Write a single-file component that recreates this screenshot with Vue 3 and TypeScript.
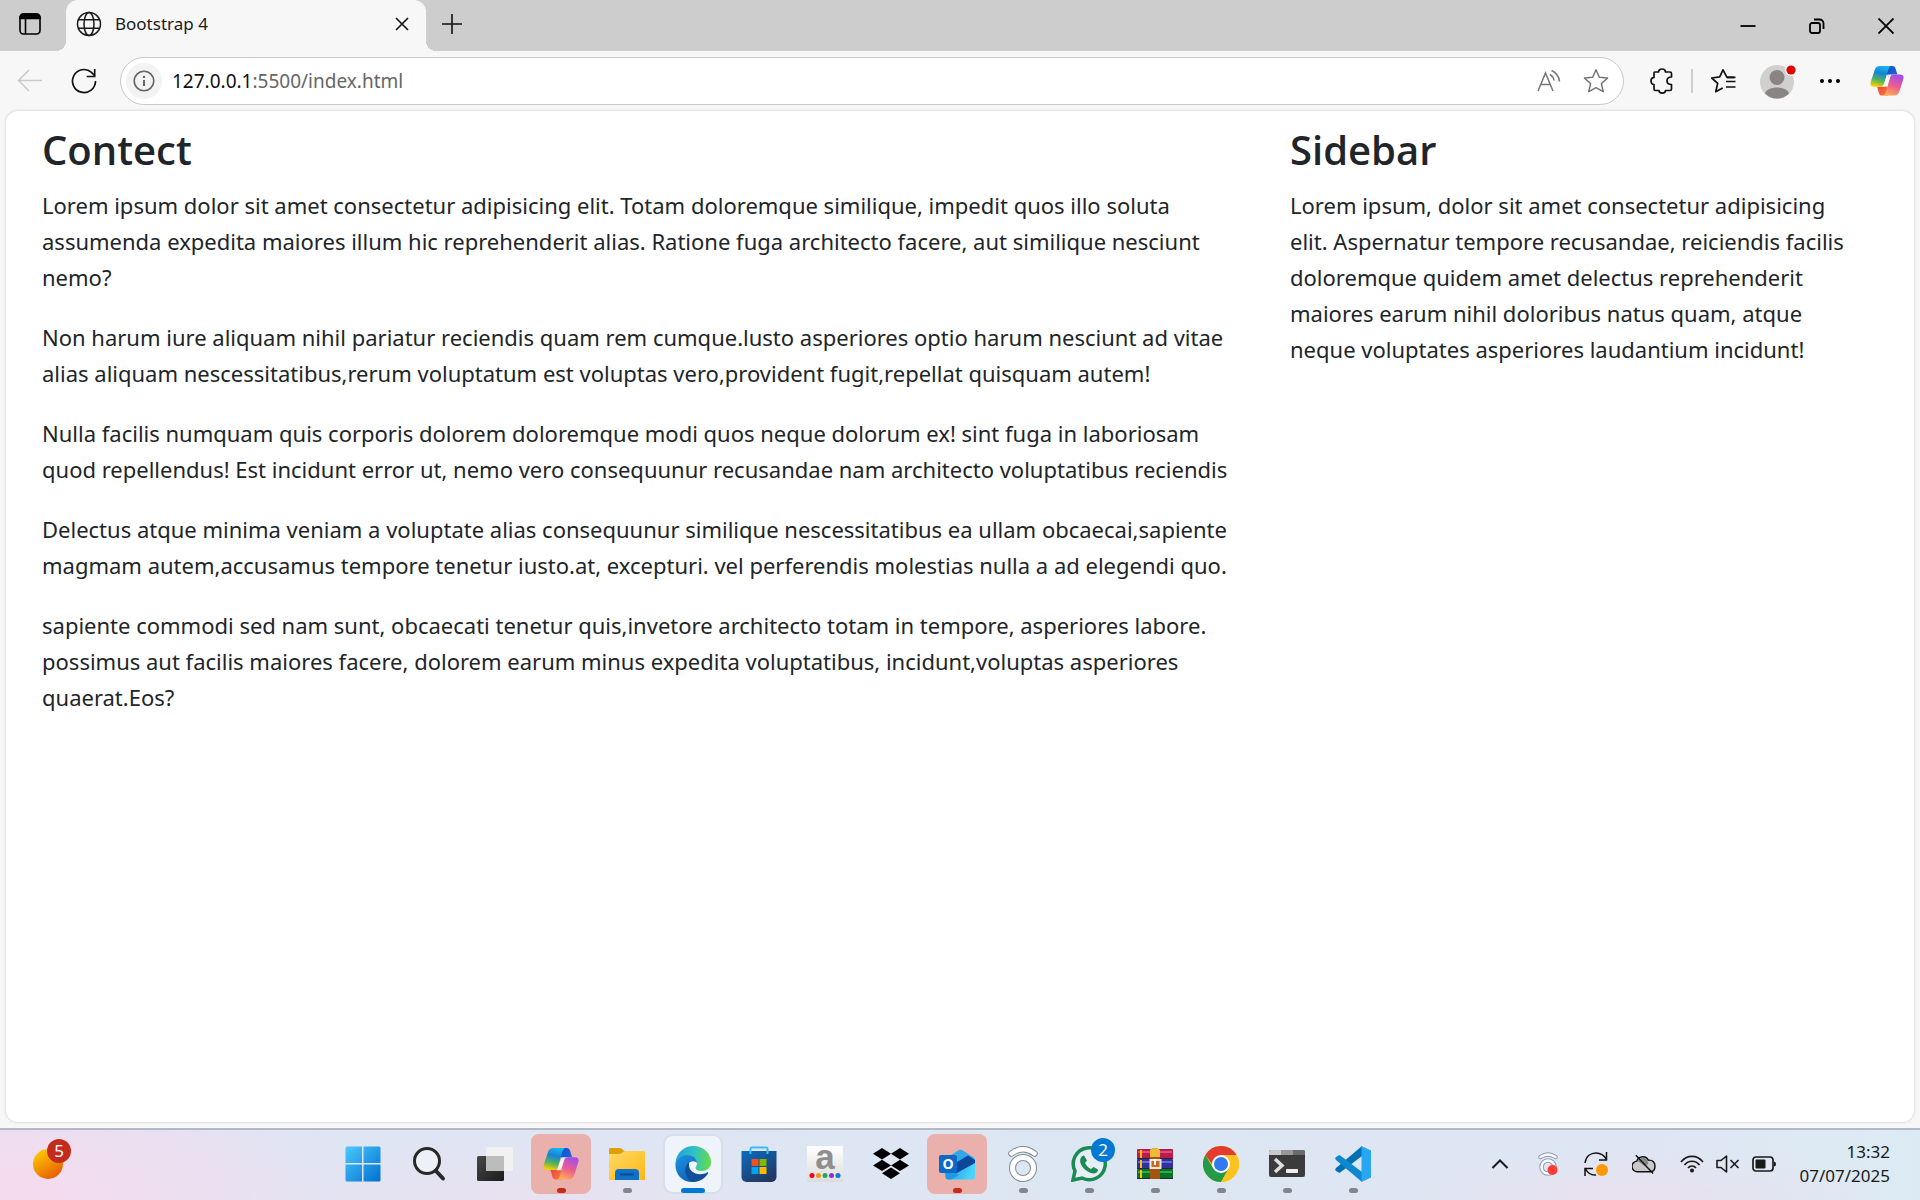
<script setup lang="ts">
const article: string[] = [
  'Lorem ipsum dolor sit amet consectetur adipisicing elit. Totam doloremque similique, impedit quos illo soluta\nassumenda expedita maiores illum hic reprehenderit alias. Ratione fuga architecto facere, aut similique nesciunt\nnemo?',
  'Non harum iure aliquam nihil pariatur reciendis quam rem cumque.lusto asperiores optio harum nesciunt ad vitae\nalias aliquam nescessitatibus,rerum voluptatum est voluptas vero,provident fugit,repellat quisquam autem!',
  'Nulla facilis numquam quis corporis dolorem doloremque modi quos neque dolorum ex! sint fuga in laboriosam\nquod repellendus! Est incidunt error ut, nemo vero consequunur recusandae nam architecto voluptatibus reciendis',
  'Delectus atque minima veniam a voluptate alias consequunur similique nescessitatibus ea ullam obcaecai,sapiente\nmagmam autem,accusamus tempore tenetur iusto.at, excepturi. vel perferendis molestias nulla a ad elegendi quo.',
  'sapiente commodi sed nam sunt, obcaecati tenetur quis,invetore architecto totam in tempore, asperiores labore.\npossimus aut facilis maiores facere, dolorem earum minus expedita voluptatibus, incidunt,voluptas asperiores\nquaerat.Eos?',
]
const aside =
  'Lorem ipsum, dolor sit amet consectetur adipisicing\nelit. Aspernatur tempore recusandae, reiciendis facilis\ndoloremque quidem amet delectus reprehenderit\nmaiores earum nihil doloribus natus quam, atque\nneque voluptates asperiores laudantium incidunt!'
</script>

<template>
  <div class="desktop">
    <svg class="defs" width="0" height="0" aria-hidden="true">
      <defs>
        <linearGradient id="cpA" x1="0.6" y1="0" x2="0.35" y2="1">
          <stop offset="0" stop-color="#18b5f0" /><stop offset="0.35" stop-color="#1583d8" />
          <stop offset="0.7" stop-color="#55b45a" /><stop offset="1" stop-color="#f5d000" />
        </linearGradient>
        <linearGradient id="cpB" x1="0.7" y1="0" x2="0.3" y2="1">
          <stop offset="0" stop-color="#a04df0" /><stop offset="0.5" stop-color="#ec5a92" /><stop offset="1" stop-color="#ffb050" />
        </linearGradient>
        <linearGradient id="cpC" x1="0" y1="0" x2="1" y2="1">
          <stop offset="0" stop-color="#0a50c8" /><stop offset="1" stop-color="#2268e0" />
        </linearGradient>
        <linearGradient id="cpD" x1="0" y1="0" x2="1" y2="1">
          <stop offset="0" stop-color="#e8403c" /><stop offset="1" stop-color="#ff7a3c" />
        </linearGradient>
        <symbol id="copilot" viewBox="0 0 36 34">
          <path d="M17 1h6.500c2 0 3 1 3.600 3l2 6.200h-5.600c-2 0-3.300 1-3.900 3L17 8z" fill="url(#cpC)" />
          <path d="M19 32.500h-6.300c-2 0-2.800-1-3.400-3L7.500 23H13c2 0 3-1 3.500-2.500L20 25z" fill="url(#cpD)" />
          <path fill-rule="evenodd" d="M10.500 1H23c-2 0-2.800 1.500-3.500 3.500L15 19.500C14.200 22.200 13 23 11 23H4c-3 0-4.200-2-3.300-5L5 5C6 2.200 7.500 1 10.500 1z" fill="url(#cpA)" />
          <path d="M25.500 32.500H13c2 0 3-1.500 3.700-3.500L21 14c.8-2.700 2.200-3.800 4.200-3.800H32c3 0 4.200 2 3.300 5L31 28.500c-1 2.800-2.500 4-5.500 4z" fill="url(#cpB)" />
          <path d="M18.600 10.200h4.400c-1.400.7-1.800 2-2.300 3.800l-2.700 9.200H13.500c1-.7 1.500-2 2-3.700z" fill="#fff" fill-opacity="0.850" />
        </symbol>
        <linearGradient id="winG" x1="0" y1="0" x2="1" y2="1">
          <stop offset="0" stop-color="#4bc9fb" /><stop offset="1" stop-color="#006fd0" />
        </linearGradient>
        <linearGradient id="sunG" x1="0.2" y1="0" x2="0.8" y2="1">
          <stop offset="0" stop-color="#ffcf00" /><stop offset="1" stop-color="#e65500" />
        </linearGradient>
        <linearGradient id="foldG" x1="0" y1="0" x2="1" y2="1">
          <stop offset="0" stop-color="#ffd968" /><stop offset="1" stop-color="#fdb813" />
        </linearGradient>
        <linearGradient id="edgeA" x1="0" y1="0.3" x2="1" y2="0.4">
          <stop offset="0" stop-color="#1f9fe0" /><stop offset="0.5" stop-color="#2fc0c8" /><stop offset="1" stop-color="#62dc4c" />
        </linearGradient>
        <linearGradient id="edgeB" x1="0" y1="0" x2="0.6" y2="1">
          <stop offset="0" stop-color="#1a94e0" /><stop offset="1" stop-color="#0f62b8" />
        </linearGradient>
        <linearGradient id="storeG" x1="0" y1="0" x2="0.6" y2="1">
          <stop offset="0" stop-color="#0b6cc0" /><stop offset="1" stop-color="#213a66" />
        </linearGradient>
        <linearGradient id="amzG" x1="0" y1="0" x2="0" y2="1">
          <stop offset="0" stop-color="#ffffff" /><stop offset="1" stop-color="#dcdcdc" />
        </linearGradient>
        <linearGradient id="darkG" x1="0" y1="0" x2="1" y2="1">
          <stop offset="0" stop-color="#484848" /><stop offset="1" stop-color="#1b1b1b" />
        </linearGradient>
        <linearGradient id="mailG" x1="0" y1="0" x2="1" y2="0.3">
          <stop offset="0" stop-color="#168fdc" /><stop offset="1" stop-color="#48d4fb" />
        </linearGradient>
      </defs>
    </svg>

    <header class="tabstrip">
      <button class="bare tab-actions" aria-label="Tab actions menu">
        <svg width="22" height="22" viewBox="0 0 22 22" fill="none" stroke="#000" stroke-width="1.600">
          <rect x="1" y="1" width="20" height="20" rx="3.500" />
          <path d="M1 5V4.500A3.500 3.500 0 0 1 4.500 1h13A3.500 3.500 0 0 1 21 4.500V5.500H1z" fill="#000" />
          <path d="M6.500 5v16" />
        </svg>
      </button>
      <div class="tab">
        <svg width="26" height="26" viewBox="0 0 26 26" fill="none" stroke="#1a1a1a" stroke-width="1.500">
          <circle cx="13" cy="13" r="11.500" />
          <ellipse cx="13" cy="13" rx="5" ry="11.500" />
          <path d="M2.500 8.800h21M2.500 17.200h21" />
        </svg>
        <span class="tab-title">Bootstrap 4</span>
        <button class="bare" aria-label="Close tab">
          <svg width="14" height="14" viewBox="0 0 14 14" stroke="#111" stroke-width="1.600"><path d="M1 1l12 12M13 1L1 13" /></svg>
        </button>
      </div>
      <button class="bare new-tab" aria-label="New tab">
        <svg width="22" height="22" viewBox="0 0 22 22" stroke="#111" stroke-width="1.600"><path d="M11 1v20M1 11h20" /></svg>
      </button>
      <div class="window-controls">
        <button class="bare" aria-label="Minimize">
          <svg width="16" height="16" viewBox="0 0 16 16"><path d="M0.500 8h15" stroke="#000" stroke-width="1.800" /></svg>
        </button>
        <button class="bare" aria-label="Restore">
          <svg width="16" height="16" viewBox="0 0 16 16" fill="none" stroke="#000" stroke-width="1.800">
            <rect x="1" y="5" width="10" height="10" rx="2" /><path d="M5 1.500h5.500a4 4 0 0 1 4 4V11" />
          </svg>
        </button>
        <button class="bare" aria-label="Close">
          <svg width="16" height="16" viewBox="0 0 16 16" stroke="#000" stroke-width="1.800"><path d="M0.500 0.500l15 15M15.500 0.500l-15 15" /></svg>
        </button>
      </div>
    </header>

    <nav class="toolbar">
      <button class="bare tool" aria-label="Back" disabled>
        <svg width="26" height="24" viewBox="0 0 26 24" fill="none" stroke="#c9c9c9" stroke-width="1.500"><path d="M25 11.500H1.500M12 1L1.500 11.500 12 22" /></svg>
      </button>
      <button class="bare tool reload" aria-label="Refresh">
        <svg width="26" height="26" viewBox="0 0 26 26" fill="none" stroke="#111" stroke-width="1.700">
          <path d="M24.500 13A11.500 11.500 0 1 1 20.500 4.300L23.500 7.500" /><path d="M23.700 1v7.500h-8" />
        </svg>
      </button>
      <div class="address">
        <button class="bare site-info" aria-label="View site information">
          <svg width="22" height="22" viewBox="0 0 22 22" fill="none" stroke="#666" stroke-width="1.600">
            <circle cx="11" cy="11" r="9.800" /><path d="M11 10v6" stroke-width="2" /><circle cx="11" cy="7" r="1.200" fill="#666" stroke="none" />
          </svg>
        </button>
        <a class="url" href="#"><span class="host">127.0.0.1</span>:5500/index.html</a>
        <button class="bare" aria-label="Read aloud">
          <svg width="24" height="24" viewBox="0 0 24 24" fill="none" stroke="#767676" stroke-width="1.500">
            <path d="M1 22L8.500 4 16 22M3.700 15.500h9.600" /><path d="M13 5.500c2.500 1.500 3.600 3.500 4 6M14.500 1.500c4.500 2 7.500 6 8 11" />
          </svg>
        </button>
        <button class="bare" aria-label="Add to favorites">
          <svg width="26" height="26" viewBox="0 0 26 26" fill="none" stroke="#767676" stroke-width="1.500" stroke-linejoin="round">
            <path d="M13 1.800l3.300 7.400 8.200.9-6.100 5.400 1.800 8.200-7.200-4-7.200 4 1.800-8.200-6.100-5.400 8.200-.9z" />
          </svg>
        </button>
      </div>
      <button class="bare extensions" aria-label="Extensions">
        <svg width="24" height="26" viewBox="0 0 24 26" fill="none" stroke="#111" stroke-width="1.700" stroke-linejoin="round">
          <path d="M4.500 4h4c0-4 7-4 7 0H20c1 0 1.500.5 1.500 1.500V9c-6 0-6 7.500 0 7.500V21c0 1-.5 1.500-1.500 1.500h-4.500c0 3.500-6.500 3.500-6.500 0H5.500C4.500 22.500 4 22 4 21v-4.500c-4 0-4-7 0-7V5c0-.6.200-1 .5-1z" />
        </svg>
      </button>
      <span class="divider"></span>
      <button class="bare favorites" aria-label="Favorites">
        <svg width="26" height="26" viewBox="0 0 26 26" fill="none" stroke="#111" stroke-width="1.700" stroke-linejoin="round">
          <path d="M24 9.300H17L13 1.800 9.700 8.900l-8 1.100 6 5.400-2 8.300 7-3.700" /><path d="M16 13.500h9.500M16 19h9.500M17 9.300h8.500" />
        </svg>
      </button>
      <button class="bare profile" aria-label="Profile">
        <svg width="38" height="38" viewBox="0 0 38 38">
          <circle cx="18" cy="20" r="17" fill="#d2d0ce" />
          <circle cx="18" cy="15.500" r="7.500" fill="#8a8583" />
          <path d="M6 31.500c2-8 22-8 24 0a17 17 0 0 1-24 0z" fill="#8a8583" />
          <circle cx="32" cy="8" r="6" fill="#f7f7f7" /><circle cx="32" cy="8" r="4.600" fill="#e30000" />
        </svg>
      </button>
      <button class="bare more" aria-label="Settings and more">
        <svg width="22" height="6" viewBox="0 0 22 6"><circle cx="3" cy="3" r="2" /><circle cx="11" cy="3" r="2" /><circle cx="19" cy="3" r="2" /></svg>
      </button>
      <button class="bare copilot" aria-label="Copilot"><svg width="34" height="32"><use href="#copilot" /></svg></button>
    </nav>

    <main class="page">
      <section class="col">
        <h3>Contect</h3>
        <p v-for="(text, i) in article" :key="i">{{ text }}</p>
      </section>
      <aside class="col">
        <h3>Sidebar</h3>
        <p>{{ aside }}</p>
      </aside>
    </main>

    <footer class="taskbar">
      <div class="widgets">
        <button class="bare weather" aria-label="Widgets">
          <svg width="30" height="30" viewBox="0 0 30 30"><circle cx="15" cy="15" r="15" fill="url(#sunG)" /></svg>
          <span class="badge red">5</span>
        </button>
      </div>

      <div class="apps">
        <button class="bare app" aria-label="Start">
          <svg width="36" height="36" viewBox="0 0 36 36"><path d="M2 .5h15v16.500H.5V2A1.500 1.500 0 0 1 2 .500zM18.500.5H34A1.500 1.500 0 0 1 35.500 2v15h-17zM.5 18.500h16.500v17H2A1.500 1.500 0 0 1 .5 34zM18.500 18.500h17V34a1.500 1.500 0 0 1-1.500 1.500H18.500z" fill="url(#winG)" /></svg>
        </button>
        <button class="bare app" aria-label="Search">
          <svg width="36" height="36" viewBox="0 0 36 36" fill="none" stroke="#282828"><circle cx="16" cy="15" r="12.500" fill="#edf1f7" stroke-width="3" /><path d="M25 25l7 7.500" stroke-width="4" stroke-linecap="round" /></svg>
        </button>
        <button class="bare app" aria-label="Task view">
          <svg width="36" height="36" viewBox="0 0 36 36"><rect x="0" y="10" width="27" height="25" rx="1.500" fill="url(#darkG)" /><rect x="9" y="1" width="27" height="24" rx="1.500" fill="#f1f1f1" /><path d="M9 10h18v15H10.500A1.500 1.500 0 0 1 9 23.500z" fill="#bcbcbc" /></svg>
        </button>
        <button class="bare app alert" aria-label="Copilot"><svg width="36" height="34"><use href="#copilot" /></svg><i class="run"></i></button>
        <button class="bare app" aria-label="File Explorer">
          <svg width="36" height="36" viewBox="0 0 36 36"><path d="M0 3.500C0 2.500.5 2 1.500 2H11c2 0 3 3 5 3h10v8H0z" fill="#dfa005" /><path d="M0 8h10c3 0 4-3 6-3h18.500c1 0 1.500.5 1.500 1.500V34H1.500C.5 34 0 33.500 0 32.500z" fill="url(#foldG)" /><path d="M6 34v-7a4 4 0 0 1 4-4h16a4 4 0 0 1 4 4v7z" fill="#0d72c8" /><path d="M11 28.500h14" stroke="#0a4b90" stroke-width="2" /></svg><i class="run"></i>
        </button>
        <button class="bare app active" aria-label="Microsoft Edge">
          <svg width="36" height="36" viewBox="0 0 36 36">
            <path d="M.5 17C1.500 6 9.500 0 18.500 0 29 0 36 8 36 16c0 6-4.500 9-9.500 9-4 0-6-1.500-6-3 0-1 1.500-2 1.500-4.500 0-4-4-8-10-8-6 0-10 3.500-11.500 7.500z" fill="url(#edgeA)" />
            <path d="M.5 17C2 12 7 9 12 9c6 0 10 4 10 8-1-2-7-3-8.500 1C11 25 17 32 26 32c-3 3-6 4-9 4C7 36-.5 28 .5 17z" fill="url(#edgeB)" />
            <path d="M14 16c-6 5-5 16 4 20 7 0 12-4 15-8.500.6-1-.2-1.700-1-1-1.500.9-4 1.700-7 1.700-6.500 0-11-4.500-11-8.700z" fill="#124f9a" />
          </svg><i class="run wide"></i>
        </button>
        <button class="bare app" aria-label="Microsoft Store">
          <svg width="36" height="36" viewBox="0 0 36 36"><path d="M.5 5h35v26a5 5 0 0 1-5 5h-25a5 5 0 0 1-5-5z" fill="url(#storeG)" /><path d="M9.500 8V3c0-1 .5-1.500 1.500-1.500h14c1 0 1.500.5 1.500 1.500v5" fill="none" stroke="#34bff4" stroke-width="2" /><path d="M10.500 13h7v7h-7z" fill="#f25022" /><path d="M18.500 13h7v7h-7z" fill="#7fba00" /><path d="M10.500 21h7v7h-7z" fill="#00a4ef" /><path d="M18.500 21h7v7h-7z" fill="#ffb900" /></svg>
        </button>
        <button class="bare app" aria-label="Amazon">
          <svg class="spill" width="36" height="36" viewBox="0 0 36 36"><path d="M0 0h36v36H0z" fill="url(#amzG)" /><text x="18" y="23" text-anchor="middle" font-family="Liberation Sans, sans-serif" font-weight="700" font-size="35" fill="#8e8e8e">a</text><circle cx="5" cy="29.500" r="2.500" fill="#f00018" /><circle cx="11.500" cy="29.500" r="2.500" fill="#f5921e" /><circle cx="18" cy="29.500" r="2.500" fill="#1fa95a" /><circle cx="24.500" cy="29.500" r="2.500" fill="#9030d8" /><circle cx="31" cy="29.500" r="2.500" fill="#0a7bdc" /></svg>
        </button>
        <button class="bare app" aria-label="Dropbox">
          <svg width="36" height="36" viewBox="0 0 36 36"><path d="M9 2l9 5.700-9 5.700-9-5.700zM27 2l9 5.700-9 5.700-9-5.700zM9 13.700l9 5.700-9 5.700-9-5.700zM27 13.700l9 5.700-9 5.700-9-5.700zM18 21.500l9 5.700-9 5.700-9-5.700z" /></svg>
        </button>
        <button class="bare app alert" aria-label="Outlook">
          <svg width="36" height="36" viewBox="0 0 36 36"><path d="M6 13L20 4c1-.7 2-.7 3 0l13 8.500-24 13z" fill="#2fa9ea" /><path d="M36 12v18a3.500 3.500 0 0 1-3.500 3.500H10A3.500 3.500 0 0 1 6.500 30V17z" fill="url(#mailG)" /><path d="M13 19L29 9.500l7 4.500v3L16 28z" fill="#0c479c" /><path d="M6.500 22L20 29l-8 4.500h-2A3.500 3.500 0 0 1 6.500 30z" fill="#1e9ae2" /><rect x="0" y="9" width="18" height="18" rx="2" fill="#0c69c5" /><text x="9" y="23" text-anchor="middle" font-family="Open Sans, sans-serif" font-size="14" font-weight="700" fill="#fff">O</text></svg><i class="run"></i>
        </button>
        <button class="bare app" aria-label="Casting">
          <svg width="36" height="36" viewBox="0 0 36 36" fill="none"><circle cx="18" cy="22" r="10.500" stroke="#858b94" stroke-width="7" /><circle cx="18" cy="22" r="10.500" stroke="#fff" stroke-width="5" /><path d="M6.500 7.500Q18-1 29.500 7.500" stroke="#858b94" stroke-width="6.500" stroke-linecap="round" /><path d="M6.500 7.500Q18-1 29.500 7.500" stroke="#fff" stroke-width="4.500" stroke-linecap="round" /></svg><i class="run"></i>
        </button>
        <button class="bare app" aria-label="WhatsApp">
          <svg width="36" height="36" viewBox="0 0 36 36"><path d="M2 34l2-9A16 16 0 1 1 11 32z" fill="#fff" fill-opacity="0.300" stroke="#1d8a53" stroke-width="3.500" /><path d="M13 9.500l3 5-2 2.500c1.500 3 3.500 4.700 6 6l2.500-2 4.500 2.500c0 4-4 4.500-7 3.500-5-1.700-9-5.500-10.500-10-1-3.500.5-7.500 3.500-7.500z" fill="#1d8a53" /></svg>
          <span class="badge blue">2</span><i class="run"></i>
        </button>
        <button class="bare app" aria-label="WinRAR">
          <svg width="36" height="36" viewBox="0 0 36 36"><rect x="0" y="3" width="36" height="10" rx="1" fill="#b51e4c" /><path d="M1 6h34" stroke="#e84a77" stroke-width="2" /><rect x="0" y="13" width="36" height="10" rx="1" fill="#32329a" /><path d="M1 16h34" stroke="#6868df" stroke-width="2" /><rect x="0" y="23" width="36" height="10" rx="1" fill="#087327" /><path d="M1 26h34" stroke="#27ad4d" stroke-width="2" /><path d="M0 12.500h36M0 22.500h36M0 32.500h36" stroke="#292333" /><path d="M4 4v8M4 14v8M4 24v8" stroke="#ffc000" stroke-width="2" /><path d="M13 4q5-4 10 0v29H13z" fill="#a75310" /><path d="M13 4q5-4 10 0v7H13z" fill="#efbb36" /><rect x="13.500" y="14" width="10" height="8" fill="#c96a1a" stroke="#ece5db" stroke-width="2" /><path d="M18 13v6" stroke="#fff" stroke-width="2" /></svg><i class="run"></i>
        </button>
        <button class="bare app" aria-label="Google Chrome">
          <svg width="36" height="36" viewBox="0 0 36 36"><circle cx="18" cy="18" r="18" fill="#fcc31e" /><path d="M2.400 9A18 18 0 0 1 33.600 9H18l-9 9z" fill="#e33b2e" /><path d="M2.400 9A18 18 0 0 0 18 36l7.800-13.500L10.200 22.500z" fill="#249a49" /><path d="M18 9h15.600A18 18 0 0 1 18 36l7.800-13.500z" fill="#fcc31e" /><circle cx="18" cy="18" r="9" fill="#fff" /><circle cx="18" cy="18" r="7" fill="#3079ee" /></svg><i class="run"></i>
        </button>
        <button class="bare app" aria-label="Terminal">
          <svg width="36" height="36" viewBox="0 0 36 36"><rect y="4" width="36" height="27" rx="2" fill="#3b3b3b" /><path d="M0 9V6a2 2 0 0 1 2-2h10v5z" fill="#c9c9c9" /><path d="M12 4h12v5H12z" fill="#979797" /><path d="M24 4h10a2 2 0 0 1 2 2v3H24z" fill="#6a6a6a" /><path d="M6 13l7 6.500L6 26" fill="none" stroke="#dedede" stroke-width="3.500" /><rect x="17" y="23" width="12" height="4" rx=".8" fill="#efefef" /></svg><i class="run"></i>
        </button>
        <button class="bare app" aria-label="Visual Studio Code">
          <svg width="36" height="36" viewBox="0 0 36 36"><path d="M27 0v10L4.500 27 1 25c-1-1-1-2 0-3z" fill="#0470b4" /><path d="M27 36V26L4.500 9 1 11c-1 1-1 2 0 3z" fill="#0d88d0" /><path d="M26.500 0L36 4.500v27L26.500 36z" fill="#29a6f2" /></svg><i class="run"></i>
        </button>
      </div>

      <div class="tray">
        <button class="bare t-chevron" aria-label="Show hidden icons"><svg width="18" height="12" viewBox="0 0 18 12" fill="none" stroke="#1a1a1a" stroke-width="2"><path d="M1.500 10L9 2.500l7.500 7.500" /></svg></button>
        <button class="bare" aria-label="Casting status">
          <svg width="24" height="24" viewBox="0 0 24 24" fill="none"><circle cx="12" cy="15" r="6.500" stroke="#8c9bb5" stroke-width="4.500" /><circle cx="12" cy="15" r="6.500" stroke="#fff" stroke-width="2.500" /><path d="M4.500 5Q12 0 19.500 5" stroke="#8c9bb5" stroke-width="4.500" stroke-linecap="round" /><path d="M4.500 5Q12 0 19.500 5" stroke="#fff" stroke-width="2.500" stroke-linecap="round" /><circle cx="16.500" cy="18" r="5" fill="#ff3b35" /></svg>
        </button>
        <button class="bare" aria-label="Windows Update">
          <svg width="24" height="24" viewBox="0 0 24 24" fill="none" stroke="#111" stroke-width="1.500"><path d="M1 11C2 4 7 1 12 1c4.500 0 8 2 10.500 6.500M22.500 0v8H15M1 24v-7.500h8M1.500 17C4 21.500 8 23.500 12 23" /><circle cx="18" cy="18" r="6" fill="#ff9800" stroke="none" /></svg>
        </button>
        <button class="bare" aria-label="OneDrive">
          <svg width="24" height="24" viewBox="1 0 25 24"><path d="M7 20a5.500 5.500 0 0 1-1-11C8 3 16 3 18 8c5-.5 7 3 7 6 0 4-2 6-5 6z" fill="#c9c9c9" stroke="#111" stroke-width="1.500" /><path d="M7 9c2-4 8-5 10-1l1 4-4 2z" fill="#868686" /><path d="M5 3l18 19" stroke="#111" stroke-width="1.500" /></svg>
        </button>
        <button class="bare system" aria-label="Network, volume and battery">
          <svg width="24" height="24" viewBox="0 0 24 24" fill="none" stroke="#1a1a1a" stroke-width="1.700"><path d="M1 10C7 2.500 17 2.500 23 10M4.500 13c4-5 11-5 15 0M8 16c2-2.700 6-2.700 8 0" /><circle cx="12" cy="18.500" r="2" fill="#1a1a1a" stroke="none" /></svg>
          <svg width="24" height="24" viewBox="0 0 24 24" fill="none" stroke="#1a1a1a" stroke-width="1.600"><path d="M1 8.500h4L10.500 4v16L5 15.500H1z" stroke-linejoin="round" /><path d="M14.500 8l8 8M22.500 8l-8 8" /></svg>
          <svg width="24" height="24" viewBox="0 0 24 24"><rect x="1" y="5" width="20" height="14" rx="3" fill="none" stroke="#1a1a1a" stroke-width="1.700" /><rect x="3.500" y="7.500" width="10" height="9" rx="1" fill="#1a1a1a" /><path d="M22 9.500q2 0 2 2.500t-2 2.500z" fill="#1a1a1a" /></svg>
        </button>
        <div class="clock"><time>13:32</time><time>07/07/2025</time></div>
      </div>
    </footer>
  </div>
</template>

<style>
body {
  margin: 0;
}
</style>

<style scoped>
.desktop {
  min-height: 100vh;
  display: flex;
  flex-direction: column;
  background: #f7f7f7;
  font-family: 'Noto Sans', 'Open Sans', sans-serif;
  color: #1a1a1a;
}
.defs {
  position: absolute;
}
svg {
  display: block;
  flex: none;
}
.spill {
  overflow: visible;
}
.bare {
  border: 0;
  padding: 0;
  background: none;
  display: flex;
  align-items: center;
  justify-content: center;
  font: inherit;
  color: inherit;
}

/* Tab strip */
.tabstrip {
  display: flex;
  height: 51px;
  background: #cdcdcd;
}
.tab-actions {
  width: 60px;
  height: 48px;
}
.tab {
  position: relative;
  display: flex;
  align-items: center;
  box-sizing: border-box;
  width: 360px;
  margin-left: 6px;
  padding: 0 17px 3px 10px;
  background: #f7f7f7;
  border-radius: 12px 12px 0 0;
}
.tab::before,
.tab::after {
  content: '';
  position: absolute;
  bottom: 0;
  width: 10px;
  height: 10px;
}
.tab::before {
  right: 100%;
  background: radial-gradient(circle at 0 0, #cdcdcd 10px, #f7f7f7 10px);
}
.tab::after {
  left: 100%;
  background: radial-gradient(circle at 100% 0, #cdcdcd 10px, #f7f7f7 10px);
}
.tab-title {
  flex: 1;
  margin-left: 13px;
  font-size: 17px;
  line-height: 24px;
}
.new-tab {
  width: 52px;
  height: 48px;
}
.window-controls {
  display: flex;
  margin-left: auto;
}
.window-controls .bare {
  width: 69px;
}

/* Toolbar */
.toolbar {
  display: flex;
  align-items: center;
  height: 60px;
  padding: 0 16px;
}
.tool {
  width: 28px;
}
.reload {
  margin: 0 22px 0 26px;
}
.address {
  flex: 1;
  display: flex;
  align-items: center;
  box-sizing: border-box;
  height: 48px;
  padding: 0 14px 0 5px;
  background: #fff;
  border: 1px solid #c8c8c8;
  border-radius: 24px;
}
.site-info {
  width: 36px;
  height: 36px;
  border-radius: 50%;
  background: #f3f3f3;
}
.url {
  flex: 1;
  margin-left: 10px;
  font-size: 19px;
  line-height: 28px;
  color: #666;
  text-decoration: none;
}
.host {
  color: #111;
}
.address .bare + .bare {
  margin-left: 22px;
}
.extensions {
  margin-left: 26px;
}
.divider {
  width: 2px;
  height: 24px;
  margin: 0 17px;
  background: #cfcfcf;
}
.profile {
  margin-left: 23px;
}
.more {
  margin: 0 29px 0 22px;
}

/* Web page */
.page {
  flex: 1;
  display: grid;
  grid-template-columns: 2fr 1fr;
  margin: 0 6px 6px;
  padding: 14px 18px;
  background: #fff;
  border-radius: 12px;
  box-shadow: 0 0 2px 1px #dedede;
}
.col {
  padding: 0 18px;
  color: #212529;
}
h3 {
  margin: 0 0 12px;
  font-family: 'Open Sans', 'Noto Sans', sans-serif;
  font-size: 40px;
  line-height: 50px;
  font-weight: 600;
}
p {
  margin: 0 0 24px;
  font-size: 22px;
  line-height: 36px;
  white-space: pre-line;
}

/* Taskbar */
.taskbar {
  display: flex;
  align-items: center;
  box-sizing: border-box;
  height: 72px;
  padding-bottom: 2px;
  border-top: 2px solid #b2b9c6;
  background:
    radial-gradient(ellipse 340px 110px at 0 100%, #f6daee, transparent),
    radial-gradient(ellipse 300px 60px at 27% 100%, #e8e1f0, transparent),
    radial-gradient(ellipse 260px 50px at 85% 100%, #e9e0ef, transparent),
    linear-gradient(90deg, #e8e0f0, #e0e5f3 18%, #dfe5f3 30%, #dce7f2 60%, #dfe6f3 85%, #dcebf3);
}
.widgets {
  width: 333px;
}
.weather {
  position: relative;
  margin: 0 33px;
}
.badge {
  position: absolute;
  width: 24px;
  height: 24px;
  border-radius: 50%;
  color: #fff;
  font-size: 17px;
  line-height: 24px;
  text-align: center;
}
.badge.red {
  left: 14px;
  top: -10px;
  background: #c42b1c;
}
.badge.blue {
  right: 4px;
  top: 4px;
  background: #0078d4;
}
.apps {
  display: flex;
  gap: 6px;
}
.app {
  position: relative;
  box-sizing: border-box;
  width: 60px;
  height: 60px;
  border-radius: 8px;
}
.alert {
  background: #e9b0ac;
}
.active {
  width: 56px;
  height: 56px;
  margin: 2px;
  background: #eff4fa;
  box-shadow: 0 0 0 2px #d5dfea;
}
.run {
  position: absolute;
  bottom: 1px;
  width: 9px;
  height: 5px;
  border-radius: 3px;
  background: #83868c;
}
.run.wide {
  bottom: -1px;
  width: 24px;
  background: #0078d4;
}
.alert .run {
  background: #c42b1c;
}
.tray {
  display: flex;
  align-items: center;
  gap: 24px;
  margin-left: auto;
  padding-right: 30px;
}
.t-chevron {
  width: 24px;
}
.system {
  gap: 12px;
}
.clock {
  display: flex;
  flex-direction: column;
  text-align: right;
  font-size: 17px;
  line-height: 24px;
}
</style>
